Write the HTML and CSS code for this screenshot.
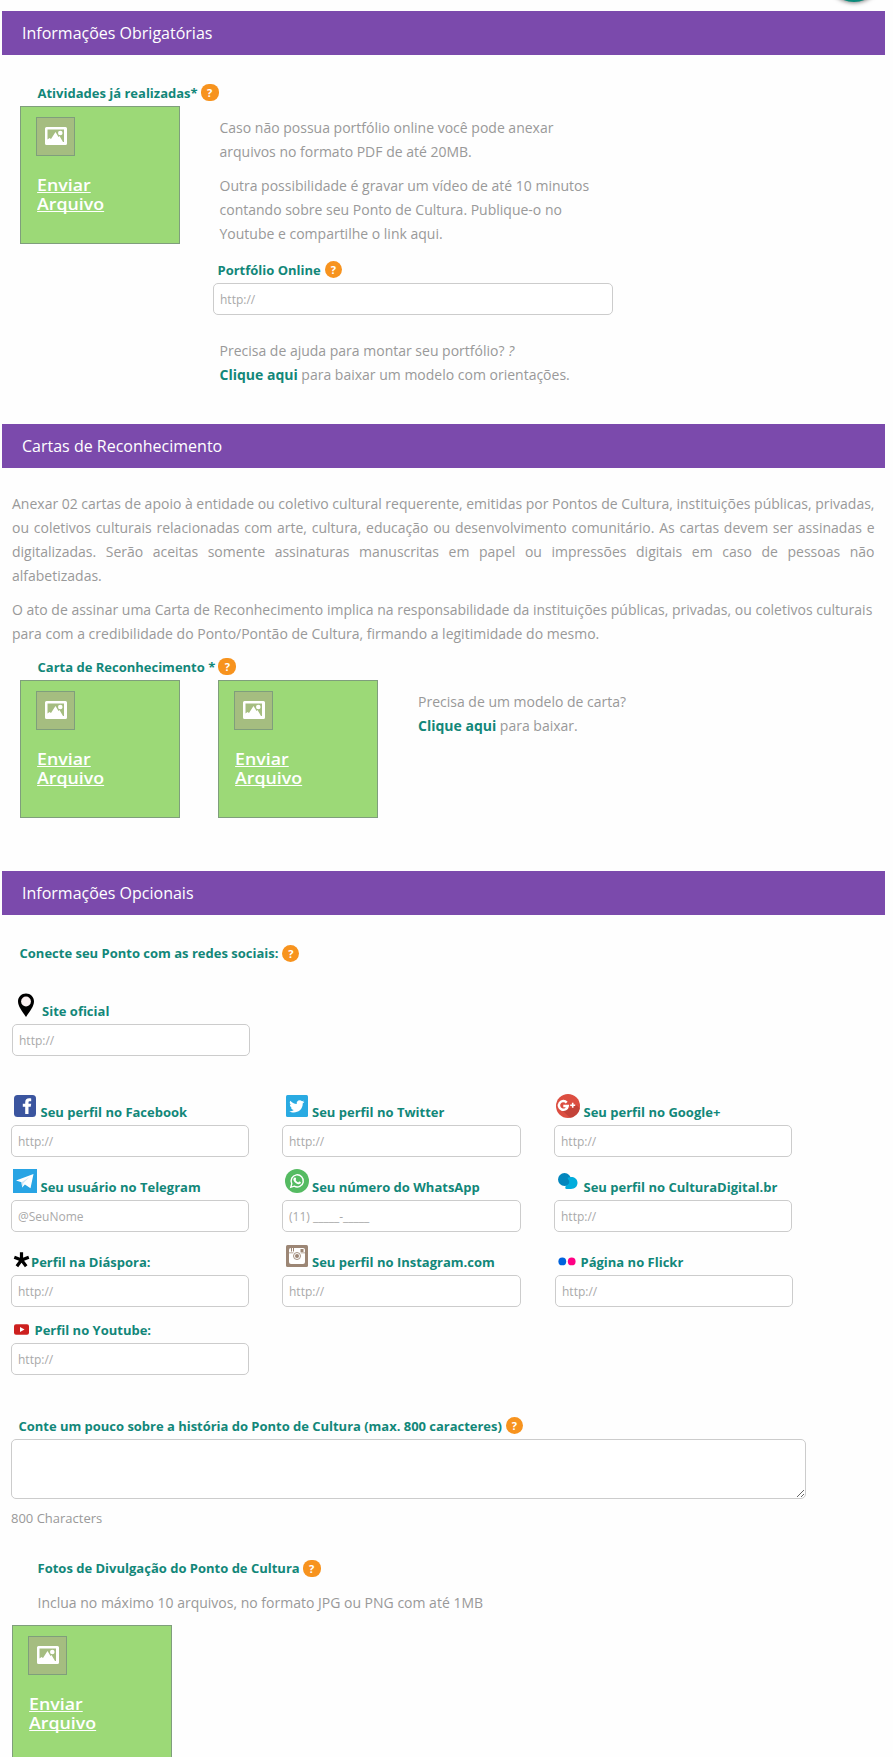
FILE: index.html
```html
<!DOCTYPE html>
<html lang="pt-BR">
<head>
<meta charset="utf-8">
<title>Informações do Ponto de Cultura</title>
<link rel="stylesheet" href="styles.css">
</head>
<body>
<svg width="0" height="0" class="defs" aria-hidden="true">
  <symbol id="picture" viewBox="0 0 22 18">
    <path fill="#fff" fill-rule="evenodd" d="M1.500 0h19A1.500 1.500 0 0 1 22 1.500v15a1.500 1.500 0 0 1-1.500 1.500h-19A1.500 1.500 0 0 1 0 16.500v-15A1.500 1.500 0 0 1 1.500 0zM2.500 2.500v10L4.500 11 6 12l4.500-7 3 5 1-1 3.500 6h1V2.500z"/>
    <circle cx="15.300" cy="6" r="2.300" fill="#fff"/>
  </symbol>
</svg>
<main class="page">
  <div class="fab"></div>

  <section class="required">
    <h2 class="banner">Informações Obrigatórias</h2>
    <div class="label label-indent">Atividades já realizadas*<span class="help wide">?</span></div>
    <div class="row">
      <a class="upload"><span class="thumb"><svg width="22" height="18"><use href="#picture"/></svg></span><span class="send">Enviar<br>Arquivo</span></a>
      <div class="portfolio">
        <div class="copy">
          <p>Caso não possua portfólio online você pode anexar<br>arquivos no formato PDF de até 20MB.</p>
          <p>Outra possibilidade é gravar um vídeo de até 10 minutos<br>contando sobre seu Ponto de Cultura. Publique-o no<br>Youtube e compartilhe o link aqui.</p>
        </div>
        <div class="label">Portfólio Online<span class="help">?</span></div>
        <input class="input" type="text" placeholder="http://">
        <p class="copy hint">Precisa de ajuda para montar seu portfólio? <i>?</i><br><b>Clique aqui</b> para baixar um modelo com orientações.</p>
      </div>
    </div>
  </section>

  <section class="letters">
    <h2 class="banner">Cartas de Reconhecimento</h2>
    <div class="copy intro">
      <p class="justified">Anexar 02 cartas de apoio à entidade ou coletivo cultural requerente, emitidas por Pontos de Cultura, instituições públicas, privadas, ou coletivos culturais relacionadas com arte, cultura, educação ou desenvolvimento comunitário. As cartas devem ser assinadas e digitalizadas. Serão aceitas somente assinaturas manuscritas em papel ou impressões digitais em caso de pessoas não<br>alfabetizadas.</p>
      <p>O ato de assinar uma Carta de Reconhecimento implica na responsabilidade da instituições públicas, privadas, ou coletivos culturais<br>para com a credibilidade do Ponto/Pontão de Cultura, firmando a legitimidade do mesmo.</p>
    </div>
    <div class="label label-indent">Carta de Reconhecimento *<span class="help wide">?</span></div>
    <div class="row">
      <a class="upload"><span class="thumb"><svg width="22" height="18"><use href="#picture"/></svg></span><span class="send">Enviar<br>Arquivo</span></a>
      <a class="upload"><span class="thumb"><svg width="22" height="18"><use href="#picture"/></svg></span><span class="send">Enviar<br>Arquivo</span></a>
      <p class="copy model">Precisa de um modelo de carta?<br><b>Clique aqui</b> para baixar.</p>
    </div>
  </section>

  <section class="optional">
    <h2 class="banner">Informações Opcionais</h2>
    <div class="label connect">Conecte seu Ponto com as redes sociais:<span class="help">?</span></div>

    <div class="field site">
      <label class="label"><svg width="30" height="31"><path fill="#000" d="M14 0.500c-4.500 0-8 3.400-8 7.800C6 13.500 10 18 14 24c4-6 8-10.500 8-15.700C22 3.900 18.500 .5 14 .5z"/><circle cx="14" cy="8.500" r="4.900" fill="#fbf2f2"/></svg>Site oficial</label>
      <input class="input" type="text" placeholder="http://">
    </div>

    <div class="networks">
      <div class="field">
        <label class="label"><svg width="29.500" height="31"><rect x="3" y="1" width="22" height="22" rx="3.500" fill="#3b559f"/><path fill="#fff" d="M14.200 20v-7.200h-2.400V9.700h2.400V8.200c0-2.900 1.500-4 4-4 .8 0 1.500.1 2 .2v2.800h-1.300c-1.100 0-1.400.5-1.400 1.400v1.100h2.700l-.5 3.100h-2.200V20z"/></svg>Seu perfil no Facebook</label>
        <input class="input" type="text" placeholder="http://">
      </div>
      <div class="field middle">
        <label class="label"><svg width="30" height="31"><rect x="4" y="1" width="22" height="22" rx="1.500" fill="#29aae2"/><path fill="#fff" transform="translate(7.500 4.600) scale(.63)" d="M23.600 4.900c-.9.400-1.800.7-2.800.8 1-.6 1.800-1.600 2.200-2.700-1 .6-2 1-3.100 1.200a4.900 4.900 0 0 0-8.400 4.500C7.400 8.500 3.800 6.500 1.300 3.500a4.900 4.900 0 0 0 1.500 6.600c-.8 0-1.600-.3-2.200-.6v.1c0 2.400 1.700 4.400 3.900 4.800-.7.200-1.500.2-2.200.1.600 2 2.400 3.400 4.600 3.400a9.900 9.900 0 0 1-7.300 2c7 4.500 21.500 1.800 21.500-12.400 1-.7 1.800-1.600 2.500-2.600z"/></svg>Seu perfil no Twitter</label>
        <input class="input" type="text" placeholder="http://">
      </div>
      <div class="field">
        <label class="label"><svg width="29.500" height="31"><circle cx="14" cy="12" r="12" fill="#dc4e41"/><path fill="#b83d34" opacity=".7" d="M8 16l8-2 6-3 4 3a12 12 0 0 1-10 9.800z"/><path fill="none" stroke="#fff" stroke-width="2.500" d="M12.700 8.600A4.400 4.400 0 1 0 13.700 12H9.300"/><path stroke="#fff" stroke-width="1.600" d="M18.700 8.800v5M16.200 11.300h5"/></svg>Seu perfil no Google+</label>
        <input class="input" type="text" placeholder="http://">
      </div>

      <div class="field">
        <label class="label"><svg width="29.500" height="31"><path fill="#28a4e4" d="M2 0h24v24H2z"/><path fill="#fff" d="M5 11.600L22.500 5l-3 14.300-5.600-3.700-2.700 2.800-.7-5.200z"/><path fill="#cfe6f5" d="M10.500 13.200l8-5.200-6 6-1.300 4.400z"/></svg>Seu usuário no Telegram</label>
        <input class="input" type="text" placeholder="@SeuNome">
      </div>
      <div class="field middle">
        <label class="label"><svg width="30" height="31"><circle cx="15" cy="12" r="12" fill="#55bb62"/><path fill="none" stroke="#fff" stroke-width="1.400" d="M8.800 18.300l1-3.600a6.100 6.100 0 1 1 2.400 2.500z"/><path fill="#fff" d="M12.800 8.600c.7-.4 1 .1 1.300 1.200.1.500-.4.800-.5 1.200.6 1.200 1.500 1.900 2.600 2.400.4-.1.800-.9 1.300-.8 1 .4 1.500.6 1.300 1.200-.4 1.400-2 1.700-3.300 1.200-2.200-.8-3.500-2.200-4.100-4-.3-1.100.5-2.100 1.400-2.400z"/></svg>Seu número do WhatsApp</label>
        <input class="input" type="text" placeholder="(11) _____-_____">
      </div>
      <div class="field">
        <label class="label"><svg width="29.500" height="31"><ellipse cx="10.500" cy="10.500" rx="6.500" ry="6.500" fill="#0286bd"/><path fill="#0286bd" d="M7 14.500l6 2.500 3-2V8l-5-2z"/><path fill="#00acdc" d="M13.500 8.800c4-2 10-.3 10 5 0 4-3 6.400-7 6.200h-4c-2-.5-1-2.500-.5-3.500 2-.4 3.500-2 3.200-4-.2-1-1.200-2.500-1.700-3.700z"/></svg>Seu perfil no CulturaDigital.br</label>
        <input class="input" type="text" placeholder="http://">
      </div>

      <div class="field">
        <label class="label"><svg width="20" height="31"><path stroke="#000" stroke-width="3.200" d="M10.500 16V8.300M10.500 16L3.300 13.300M10.500 16l7.300-2.700M10.500 16l-4.600 6.200M10.500 16l4.700 6.200"/></svg>Perfil na Diáspora:</label>
        <input class="input" type="text" placeholder="http://">
      </div>
      <div class="field middle">
        <label class="label"><svg width="30" height="31"><rect x="4" y="1" width="22" height="22" rx="1.500" fill="#9c8675"/><path fill="#fff" d="M9 4h12a2 2 0 0 1 2 2v12a2 2 0 0 1-2 2H9a2 2 0 0 1-2-2V6a2 2 0 0 1 2-2z"/><path fill="#9c8675" d="M9 4h1v3.500H9zM11 4h1v3.500h-1zM18.500 5h3v3h-3zM7 8.500h4.500v.8H7zM18.500 8.500H23v.8h-4.500z"/><circle cx="15" cy="12" r="4.600" fill="#fff"/><circle cx="15" cy="12" r="3.500" fill="none" stroke="#9c8675" stroke-width=".9"/><circle cx="15" cy="12" r="2" fill="#9c8675"/></svg>Seu perfil no Instagram.com</label>
        <input class="input" type="text" placeholder="http://">
      </div>
      <div class="field flickr">
        <label class="label"><svg width="25.500" height="31"><circle cx="7.300" cy="17.400" r="3.900" fill="#0063dc"/><circle cx="16.700" cy="17.400" r="3.900" fill="#ff0084"/></svg>Página no Flickr</label>
        <input class="input" type="text" placeholder="http://">
      </div>

      <div class="field compact">
        <label class="label"><svg width="23.500" height="24"><rect x="3" y="5.300" width="15" height="10.400" rx="2" fill="#cd201f"/><path fill="#fff" d="M9 7.900l4.500 2.500L9 12.900z"/></svg>Perfil no Youtube:</label>
        <input class="input" type="text" placeholder="http://">
      </div>
    </div>

    <div class="label story">Conte um pouco sobre a história do Ponto de Cultura (max. 800 caracteres)<span class="help">?</span></div>
    <textarea class="input story-text"></textarea>
    <div class="counter">800 Characters</div>
    <div class="label label-indent">Fotos de Divulgação do Ponto de Cultura<span class="help wide">?</span></div>
    <p class="copy photos">Inclua no máximo 10 arquivos, no formato JPG ou PNG com até 1MB</p>
    <a class="upload last"><span class="thumb"><svg width="22" height="18"><use href="#picture"/></svg></span><span class="send">Enviar<br>Arquivo</span></a>
  </section>
</main>
</body>
</html>
```
FILE: styles.css
```css
* { box-sizing: border-box; }
html, body { margin: 0; }
body {
  background: #fefefe;
  color: #999;
  font: 14px/24px "Open Sans", sans-serif;
}
p { margin: 0; }
.defs { display: block; height: 0; }
.page {
  position: relative;
  width: 893px;
  height: 1757px;
  padding-top: 11px;
  overflow: hidden;
}
.fab {
  position: absolute;
  top: -54px;
  left: 826px;
  width: 56px;
  height: 56px;
  border-radius: 50%;
  background: #0a8a7a;
  box-shadow: 0 1px 4px rgba(0, 0, 0, .5);
}
.banner {
  width: 883px;
  height: 44px;
  margin: 0 0 0 2px;
  padding-left: 20px;
  background: #7b4aac;
  color: #fff;
  font-size: 16px;
  font-weight: 400;
  line-height: 44px;
}
.required { height: 413px; }
.letters { height: 447px; }

.label {
  display: flex;
  align-items: center;
  height: 24px;
  color: #128779;
  font-size: 13px;
  font-weight: 700;
  line-height: 24px;
  white-space: nowrap;
}
.label-indent { padding-left: 37.5px; }
.help {
  width: 17px;
  height: 17px;
  margin: 0 0 0 4px;
  border-radius: 50%;
  background: #f7931e;
  color: #fff;
  font-size: 11px;
  font-weight: 700;
  line-height: 17px;
  text-align: center;
}
.help.wide { width: 18px; margin-left: 3px; border-radius: 8px; }

.required .label-indent { margin-top: 25px; margin-bottom: 1px; }
.required .label-indent, .letters .label-indent { height: 25px; }
.row { display: flex; align-items: flex-start; padding-left: 20px; }
.upload {
  display: block;
  flex: none;
  width: 160px;
  height: 138px;
  padding: 10px 15px;
  border: 1px solid #7f9e7c;
  background: #9cd977;
  color: #fff;
}
.thumb {
  display: flex;
  align-items: center;
  justify-content: center;
  width: 39px;
  height: 39px;
  padding-bottom: 1px;
  border: 1px solid #7f9e7c;
  background: #a5bd80;
}
.send {
  display: block;
  width: 100px;
  margin-top: 20px;
  padding-left: 1px;
  font-size: 16px;
  font-weight: 600;
  line-height: 19px;
  text-decoration: underline;
  text-decoration-skip-ink: none;
  transform: scaleX(1.11);
  transform-origin: left;
}
.portfolio { padding: 10px 0 0 33px; }
.portfolio .copy { padding-left: 6.5px; }
.copy p + p { margin-top: 10px; }
.portfolio .label { height: 25px; margin: 11px 0 1px; padding-left: 4.5px; }
.portfolio .input { width: 400px; }
.hint { margin-top: 24px; }
b { color: #128779; font-weight: 700; }

.intro { width: 874.5px; padding: 24px 0 0 12px; }
.justified { text-align: justify; text-align-last: justify; word-spacing: -.4px; }
.letters .label-indent { margin: 8px 0 1px; }
.letters .upload + .upload { margin-left: 38px; }
.model { padding: 10px 0 0 40px; }

.input {
  display: block;
  width: 238px;
  height: 32px;
  margin: 0;
  padding: 0 6px;
  border: 1px solid #ccc;
  border-radius: 5px;
  background: #fff;
  font: 12px "Open Sans", sans-serif;
}
.input::placeholder { color: #a9a9a9; }
.connect { margin-top: 26px; padding-left: 19.5px; }
.field .label { align-items: flex-end; height: 31px; line-height: 26px; }
.field svg { flex: none; }
.site { margin: 28px 0 0 12px; }
.middle .input { width: 239px; }
.networks {
  display: grid;
  grid-template-columns: 271px 272px 239px;
  row-gap: 12px;
  margin: 38px 0 0 11px;
}
.flickr { padding-left: 1px; }
.field.compact .label { height: 24px; }
.story { height: 25px; margin: 38px 0 1px; padding-left: 18.5px; letter-spacing: -.02px; }
.story-text { width: 795px; height: 60px; margin-left: 11px; resize: both; }
.counter { margin: 7px 0 0 11px; font-size: 13px; }
.optional .label-indent { margin-top: 26px; }
.photos { margin: 11px 0 0 37.5px; }
.upload.last { margin: 10px 0 0 12px; }
```
